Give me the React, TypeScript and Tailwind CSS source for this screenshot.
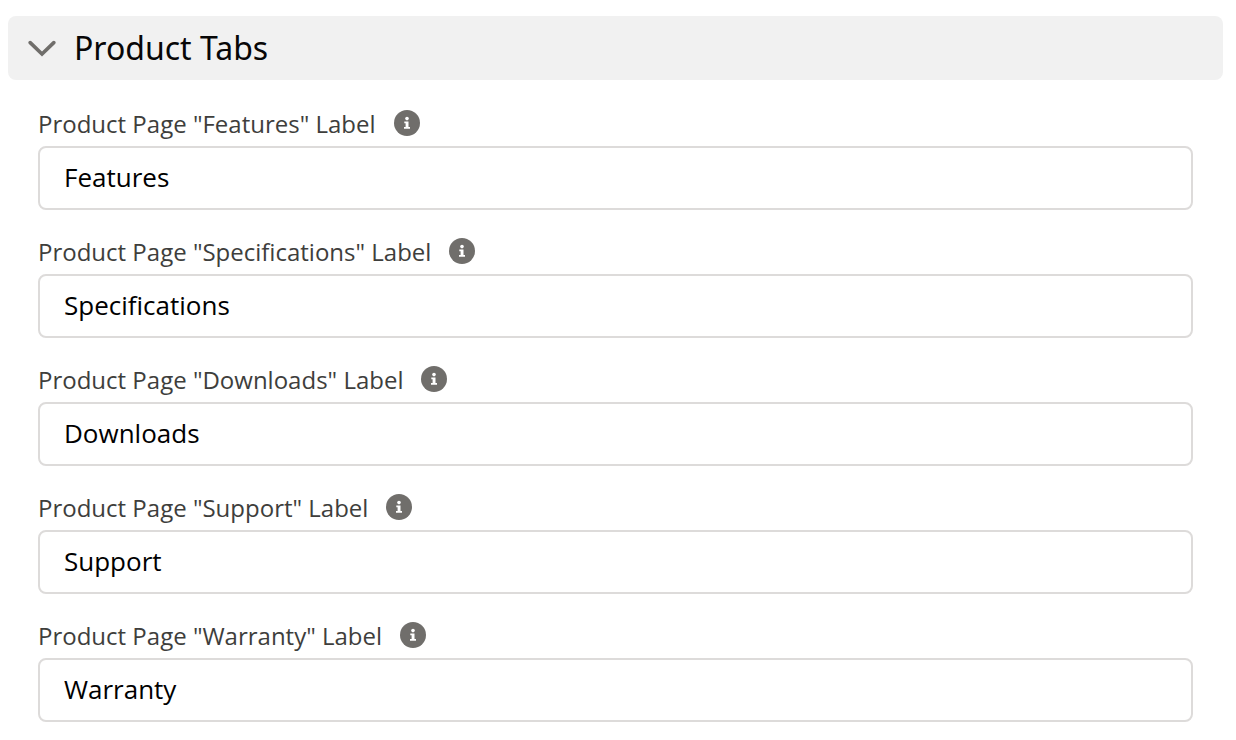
import React, { useState } from 'react';

interface Field {
  id: string;
  name: string;
}

const fields: Field[] = [
  { id: 'features', name: 'Features' },
  { id: 'specifications', name: 'Specifications' },
  { id: 'downloads', name: 'Downloads' },
  { id: 'support', name: 'Support' },
  { id: 'warranty', name: 'Warranty' },
];

const InfoIcon: React.FC = () => (
  <svg viewBox="0 0 26 26" className="size-[26px]" aria-hidden="true">
    <circle cx="13" cy="13" r="13" fill="#706e6b" />
    <circle cx="13" cy="8.6" r="1.8" fill="#fff" />
    <path d="M10.3 11.4h4.2v5.6h1.5v1.8h-6v-1.8h1.6v-3.8h-1.3z" fill="#fff" />
  </svg>
);

const LabelField: React.FC<{ field: Field }> = ({ field }) => (
  <div>
    <div className="mb-1 flex h-9 items-center gap-[18px]">
      <label htmlFor={field.id} className="text-[24px] leading-9 text-[#3e3e3c]">
        Product Page "{field.name}" Label
      </label>
      <button type="button" aria-label="Help" className="mb-0.5">
        <InfoIcon />
      </button>
    </div>
    <input
      id={field.id}
      type="text"
      defaultValue={field.name}
      className="block h-16 w-full rounded-lg border-2 border-[#dddbda] bg-white px-6 pb-0.5 text-[26px] text-black outline-none focus:border-[#1589ee]"
    />
  </div>
);

const App: React.FC = () => {
  const [open, setOpen] = useState(true);

  return (
    <main className="bg-white py-4 pr-[13px] pl-2 font-['Open_Sans','Noto_Sans',sans-serif]">
      <h2>
        <button
          type="button"
          aria-expanded={open}
          onClick={() => setOpen(!open)}
          className="flex h-16 w-full items-center gap-[18px] rounded-lg bg-[#f1f1f1] px-5 font-['Noto_Sans',sans-serif] text-[32px] text-[#080707]"
        >
          <svg viewBox="0 0 28 18" className={open ? 'h-[18px] w-7' : 'h-[18px] w-7 -rotate-90'} aria-hidden="true">
            <path d="M2.2 3.6L14 15L25.8 3.6" fill="none" stroke="#706e6b" strokeWidth="3.6" strokeLinecap="round" />
          </svg>
          Product Tabs
        </button>
      </h2>

      {open && (
        <div className="flex flex-col gap-6 px-[30px] pt-[26px]">
          {fields.map((field) => (
            <LabelField key={field.id} field={field} />
          ))}
        </div>
      )}
    </main>
  );
};

export default App;
